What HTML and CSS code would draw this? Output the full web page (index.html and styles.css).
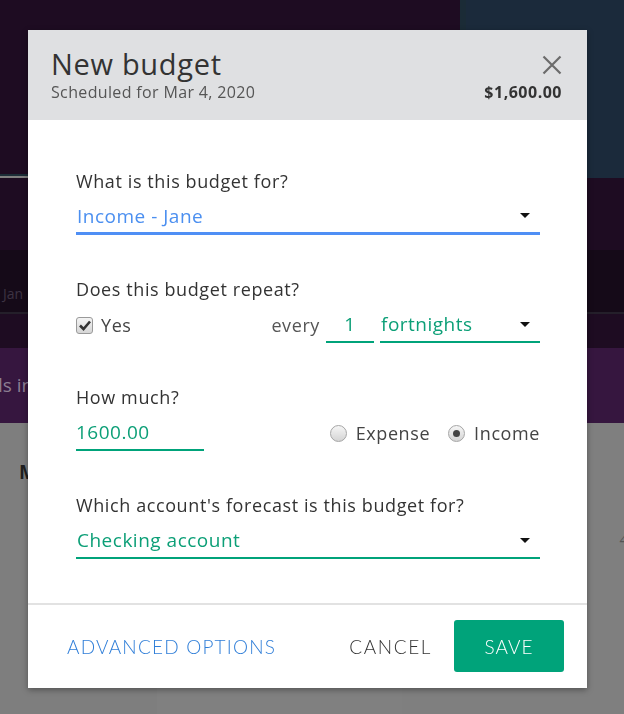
FILE: index.html
```html
<!DOCTYPE html>
<html>
<head>
<meta charset="utf-8">
<link rel="stylesheet" href="styles.css">
</head>
<body>
<div class="app">
  <div class="top">
    <div class="top-left"></div>
    <div class="top-strip"></div>
    <div class="top-right"></div>
  </div>
  <div class="band band1"></div>
  <div class="band band2"><span class="jan">Jan</span></div>
  <div class="band band3"></div>
  <div class="band band4"><span class="lsin">ls in</span></div>
  <div class="gray">
    <div class="gray-col c1"><span class="m">M</span></div>
    <div class="gray-col c2"></div>
    <div class="gray-col c3"><span class="four">4</span></div>
  </div>
</div>

<div class="modal">
  <div class="modal-head">
    <div class="head-row">
      <h1 class="title">New budget</h1>
      <svg class="close" width="20" height="20" viewBox="0 0 20 20"><path d="M1.5 1.5 L18.5 18.5 M18.5 1.5 L1.5 18.5" stroke="#6b6b6b" stroke-width="2.2" fill="none"/></svg>
    </div>
    <div class="head-row sub">
      <span class="subtitle">Scheduled for Mar 4, 2020</span>
      <span class="amount">$1,600.00</span>
    </div>
  </div>

  <div class="modal-body">
    <div class="group">
      <div class="label">What is this budget for?</div>
      <div class="field select focus">
        <span class="val blue">Income - Jane</span>
        <span class="caret"></span>
      </div>
    </div>

    <div class="group">
      <div class="label">Does this budget repeat?</div>
      <div class="row">
        <div class="check-wrap">
          <span class="checkbox"><svg width="12" height="11" viewBox="0 0 12 11"><path d="M1 5.5 L4.5 9 L11 1.5" stroke="#333" stroke-width="2.6" fill="none" stroke-linejoin="miter"/></svg></span>
          <span class="opt">Yes</span>
        </div>
        <div class="repeat">
          <span class="every">every</span>
          <div class="field num"><span class="val green">1</span></div>
          <div class="field select period"><span class="val green">fortnights</span><span class="caret"></span></div>
        </div>
      </div>
    </div>

    <div class="group">
      <div class="label">How much?</div>
      <div class="row">
        <div class="field money"><span class="val green">1600.00</span></div>
        <div class="radios">
          <span class="radio"></span><span class="opt">Expense</span>
          <span class="radio on"><span class="dot"></span></span><span class="opt">Income</span>
        </div>
      </div>
    </div>

    <div class="group">
      <div class="label">Which account's forecast is this budget for?</div>
      <div class="field select">
        <span class="val green">Checking account</span>
        <span class="caret"></span>
      </div>
    </div>
  </div>

  <div class="modal-foot">
    <span class="btn-link">ADVANCED OPTIONS</span>
    <div class="actions">
      <span class="btn-cancel">CANCEL</span>
      <span class="btn-save">SAVE</span>
    </div>
  </div>
</div>
</body>
</html>
```

FILE: styles.css
```css
html, body {
  margin: 0;
  padding: 0;
}
body {
  width: 624px;
  height: 714px;
  overflow: hidden;
  font-family: "Open Sans", Lato, sans-serif;
  background: #808080;
}

/* background app (dimmed) */
.app {
  width: 624px;
  height: 714px;
  display: flex;
  flex-direction: column;
}
.top {
  height: 178px;
  display: flex;
}
.top-left {
  width: 460px;
  height: 174px;
  background: #1e0c22;
  border-bottom: 2px solid #1c2d37;
}
.top-strip {
  width: 6px;
  background: #1b2b36;
}
.top-right {
  flex: 1;
  background: #1b2a3b;
}
.band1 {
  height: 72px;
  background: #1e0c22;
}
.band2 {
  height: 62px;
  background: #150a18;
  border-bottom: 2px solid #241f2a;
  position: relative;
}
.jan {
  position: absolute;
  left: 3px;
  top: 34px;
  font-size: 14px;
  color: #3d3343;
}
.band3 {
  height: 34px;
  background: #1e0c22;
}
.band4 {
  height: 75px;
  background: #36163f;
  position: relative;
}
.lsin {
  position: absolute;
  left: -2px;
  top: 24px;
  font-size: 19px;
  color: #8b7d91;
}
.gray {
  flex: 1;
  display: flex;
  background: #808080;
}
.gray-col {
  position: relative;
}
.c1 { width: 157px; background: #7e7e7e; }
.c2 { width: 245px; background: #808080; }
.c3 { flex: 1; background: #7f7f7f; }
.m {
  position: absolute;
  left: 19px;
  top: 36px;
  font-size: 19px;
  font-weight: 700;
  color: #1f1f1f;
}
.four {
  position: absolute;
  right: -4px;
  top: 106px;
  font-size: 15px;
  color: #555;
}

/* modal */
.modal {
  position: fixed;
  left: 28px;
  top: 30px;
  width: 559px;
  height: 658px;
  background: #fff;
  box-shadow: 0 2px 6px rgba(0,0,0,0.35);
  display: flex;
  flex-direction: column;
  color: #333;
}
.modal-head {
  height: 90px;
  box-sizing: border-box;
  background: #dfe0e2;
  padding: 16px 25px 0 23px;
}
.head-row {
  display: flex;
  justify-content: space-between;
  align-items: center;
}
.title {
  margin: 0;
  font-size: 29px;
  font-weight: 400;
  line-height: 36px;
  color: #333;
  letter-spacing: 0.7px;
}
.close {
  display: block;
  margin-top: 2px;
}
.sub {
  margin-top: -1px;
}
.subtitle {
  font-size: 16px;
  letter-spacing: 0.35px;
  color: #555;
}
.amount {
  font-size: 16px;
  font-weight: 700;
  letter-spacing: 0.5px;
  color: #333;
}

.modal-body {
  flex: 1;
  padding: 49px 47px 0 48px;
  display: flex;
  flex-direction: column;
  gap: 42px;
  border-bottom: 2px solid #e2e2e2;
}
.label {
  font-size: 18px;
  line-height: 24px;
  letter-spacing: 0.6px;
  color: #333;
  margin-bottom: 6px;
}
.field {
  height: 36px;
  box-sizing: border-box;
  border-bottom: 2px solid #00a37a;
  display: flex;
  align-items: center;
  font-size: 19px;
  letter-spacing: 0.5px;
}
.field.focus {
  border-bottom: 3px solid #4f8ff5;
}
.select {
  justify-content: space-between;
  padding-left: 1px;
  padding-right: 10px;
}
.val.blue { color: #4b8ff0; }
.val.green { color: #0c9f77; }
.caret {
  width: 0;
  height: 0;
  border-left: 5px solid transparent;
  border-right: 5px solid transparent;
  border-top: 5px solid #111;
}
.row {
  display: flex;
  justify-content: space-between;
  align-items: center;
}
.check-wrap {
  display: flex;
  align-items: center;
  gap: 8px;
}
.checkbox {
  width: 15px;
  height: 15px;
  border: 1px solid #9a9a9a;
  border-radius: 3px;
  background: linear-gradient(#f4f4f4, #d6d6d6);
  display: flex;
  align-items: center;
  justify-content: center;
}
.opt {
  font-size: 18px;
  letter-spacing: 0.6px;
  color: #444;
}
.repeat {
  display: flex;
  align-items: center;
  gap: 6px;
}
.every {
  font-size: 18px;
  letter-spacing: 0.6px;
  color: #555;
}
.num {
  width: 48px;
  justify-content: center;
}
.period {
  width: 160px;
}
.money {
  width: 128px;
}
.radios {
  display: flex;
  align-items: center;
}
.radio {
  width: 17px;
  height: 17px;
  box-sizing: border-box;
  border: 1px solid #a5a5a5;
  border-radius: 50%;
  background: linear-gradient(#f6f6f6, #d4d4d4);
  display: flex;
  align-items: center;
  justify-content: center;
  margin-right: 9px;
}
.radios .opt:nth-child(2) {
  margin-right: 18px;
}
.dot {
  width: 7px;
  height: 7px;
  border-radius: 50%;
  background: #444;
}

.modal-foot {
  height: 83px;
  box-sizing: border-box;
  padding: 15px 23px 16px 39px;
  display: flex;
  align-items: center;
  justify-content: space-between;
  font-family: Lato, "Open Sans", sans-serif;
}
.btn-link {
  font-size: 19px;
  font-weight: 300;
  letter-spacing: 1.2px;
  color: #2f7ed8;
}
.actions {
  display: flex;
  align-items: center;
  gap: 22px;
}
.btn-cancel {
  font-size: 19px;
  font-weight: 300;
  letter-spacing: 1.6px;
  color: #333;
}
.btn-save {
  width: 110px;
  height: 52px;
  border-radius: 3px;
  background: #00a37a;
  color: #fff;
  font-size: 19px;
  font-weight: 300;
  letter-spacing: 1px;
  display: flex;
  align-items: center;
  justify-content: center;
}
```
